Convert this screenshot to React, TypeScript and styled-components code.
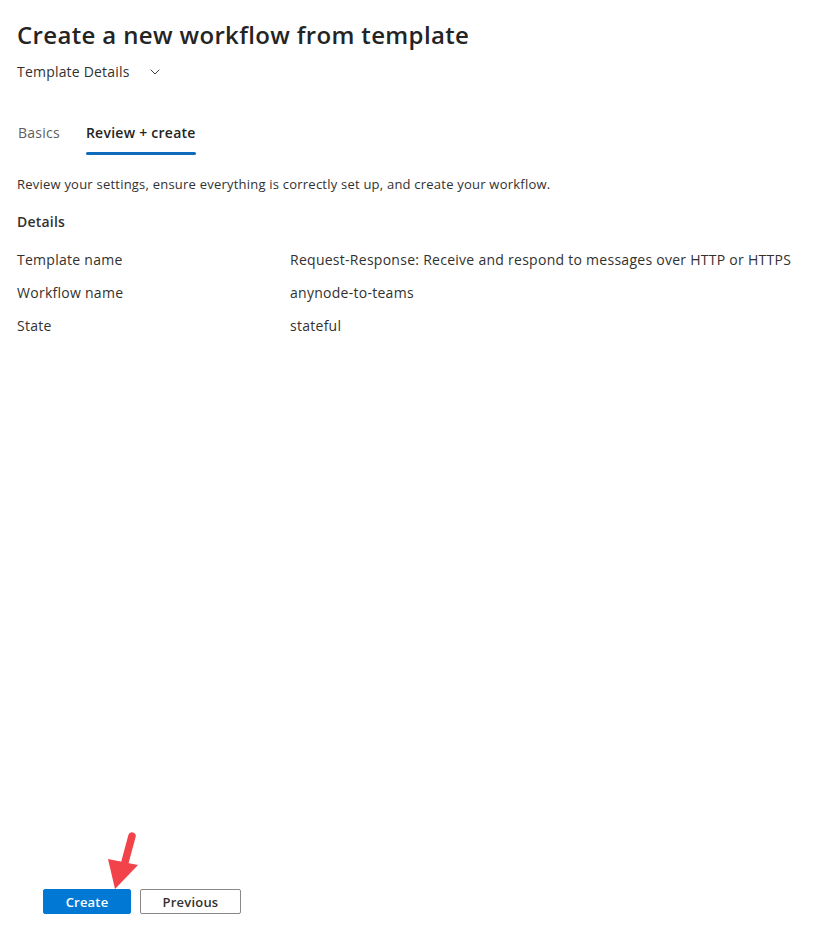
import React from "react";
import styled, { createGlobalStyle } from "styled-components";
import { ChevronDown } from "lucide-react";

const GlobalStyle = createGlobalStyle`
  html, body {
    margin: 0;
    padding: 0;
    background: #ffffff;
  }
  body {
    font-family: "Open Sans", "Noto Sans", "Liberation Sans", sans-serif;
    color: #323130;
  }
`;

const Page = styled.div`
  min-height: 100vh;
  box-sizing: border-box;
  display: flex;
  flex-direction: column;
  padding: 0 0 16px 17px;
`;

const Title = styled.h1`
  margin: 18px 0 0;
  font-size: 24px;
  line-height: 34px;
  font-weight: 600;
  color: #242424;
  letter-spacing: 0.35px;
`;

const DetailsToggle = styled.div`
  display: flex;
  align-items: center;
  gap: 17px;
  margin-top: 10px;
  font-size: 14px;
  line-height: 20px;
  color: #323130;
  letter-spacing: 0.2px;
`;

const TabBar = styled.div`
  display: flex;
  gap: 26px;
  margin-top: 41px;
`;

const Tab = styled.div<{ active?: boolean }>`
  position: relative;
  padding: 0 0 12px;
  font-size: 14px;
  line-height: 20px;
  letter-spacing: 0.25px;
  font-weight: ${({ active }) => (active ? 600 : 400)};
  color: ${({ active }) => (active ? "#242424" : "#605e5c")};
  margin-left: ${({ active }) => (active ? 0 : 1)}px;

  &::after {
    content: "";
    display: ${({ active }) => (active ? "block" : "none")};
    position: absolute;
    left: 0;
    right: 0;
    bottom: 0;
    height: 3px;
    border-radius: 2px;
    background: #0f6cbd;
  }
`;

const Intro = styled.p`
  margin: 19px 0 0;
  font-size: 13px;
  line-height: 20px;
  letter-spacing: 0.22px;
`;

const SectionHeading = styled.h2`
  margin: 18px 0 0;
  font-size: 14px;
  line-height: 20px;
  font-weight: 600;
  letter-spacing: 0.2px;
`;

const DetailList = styled.dl`
  margin: 18px 0 0;
  display: grid;
  grid-template-columns: 273px 1fr;
  row-gap: 13px;
  font-size: 14px;
  line-height: 20px;
  letter-spacing: 0.27px;
`;

const Term = styled.dt`
  margin: 0;
`;

const Value = styled.dd`
  margin: 0;
`;

const Footer = styled.div`
  position: relative;
  margin-top: auto;
  padding-left: 26px;
  display: flex;
  gap: 9px;
`;

const Button = styled.button<{ primary?: boolean }>`
  height: 25px;
  min-width: ${({ primary }) => (primary ? 88 : 101)}px;
  padding: 0 16px;
  box-sizing: border-box;
  font-family: inherit;
  font-size: 13px;
  font-weight: 600;
  letter-spacing: 0.2px;
  border-radius: 2px;
  cursor: pointer;
  border: 1px solid ${({ primary }) => (primary ? "#0078d4" : "#8a8886")};
  background: ${({ primary }) => (primary ? "#0078d4" : "#ffffff")};
  color: ${({ primary }) => (primary ? "#ffffff" : "#323130")};
`;

const Pointer = styled.svg`
  position: absolute;
  left: 83px;
  top: -61px;
  pointer-events: none;
`;

const rows = [
  {
    label: "Template name",
    value:
      "Request-Response: Receive and respond to messages over HTTP or HTTPS",
  },
  { label: "Workflow name", value: "anynode-to-teams" },
  { label: "State", value: "stateful" },
];

export default function App() {
  return (
    <>
      <GlobalStyle />
      <Page>
        <Title>Create a new workflow from template</Title>
        <DetailsToggle>
          Template Details
          <ChevronDown size={16} strokeWidth={1.4} color="#323130" />
        </DetailsToggle>

        <TabBar>
          <Tab>Basics</Tab>
          <Tab active>Review + create</Tab>
        </TabBar>

        <Intro>
          Review your settings, ensure everything is correctly set up, and
          create your workflow.
        </Intro>

        <SectionHeading>Details</SectionHeading>
        <DetailList>
          {rows.map((row) => (
            <React.Fragment key={row.label}>
              <Term>{row.label}</Term>
              <Value>{row.value}</Value>
            </React.Fragment>
          ))}
        </DetailList>

        <Footer>
          <Button primary>Create</Button>
          <Button>Previous</Button>
          <Pointer width="45" height="65" viewBox="0 0 45 65">
            <line
              x1="32"
              y1="8"
              x2="25"
              y2="34"
              stroke="#f2434a"
              strokeWidth="7.5"
              strokeLinecap="round"
            />
            <polygon points="8,31 38,37 15,61" fill="#f2434a" />
          </Pointer>
        </Footer>
      </Page>
    </>
  );
}
